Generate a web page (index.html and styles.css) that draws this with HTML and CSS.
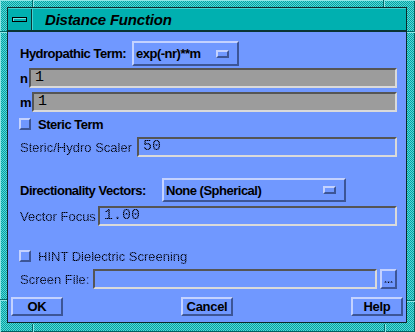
FILE: index.html
```html
<!DOCTYPE html>
<html>
<head>
<meta charset="utf-8">
<link rel="stylesheet" href="styles.css">
</head>
<body>
<div class="frame">
  <span class="mark mark-v mark-tl"></span>
  <span class="mark mark-v mark-tr"></span>
  <span class="mark mark-v mark-bl"></span>
  <span class="mark mark-v mark-br"></span>
  <span class="mark mark-h mark-lt"></span>
  <span class="mark mark-h mark-rt"></span>
  <span class="mark mark-h mark-lb"></span>
  <span class="mark mark-h mark-rb"></span>
  <div class="window">
    <div class="titlebar">
      <div class="menu-btn"><span class="minus"></span></div>
      <div class="title">Distance Function</div>
    </div>
    <div class="content">
      <div class="row row-opt r1">
        <span class="label bold w-hydro">Hydropathic Term:</span>
        <div class="option w-opt1"><span class="opt-text">exp(-nr)**m</span><span class="ind"></span></div>
      </div>
      <div class="row row-field r2">
        <span class="label bold w-n">n</span>
        <div class="field"><span class="ftext">1</span></div>
      </div>
      <div class="row row-field r3">
        <span class="label bold w-m">m</span>
        <div class="field"><span class="ftext">1</span></div>
      </div>
      <div class="row row-check r4">
        <span class="check"></span>
        <span class="label bold">Steric Term</span>
      </div>
      <div class="row row-field r5">
        <span class="label stip w-scaler">Steric/Hydro Scaler</span>
        <div class="field off"><span class="ftext stip">50</span></div>
      </div>
      <div class="row row-opt r6">
        <span class="label bold w-dir">Directionality Vectors:</span>
        <div class="option w-opt2"><span class="opt-text">None (Spherical)</span><span class="ind"></span></div>
      </div>
      <div class="row row-field r7">
        <span class="label stip w-vec">Vector Focus</span>
        <div class="field off"><span class="ftext stip">1.00</span></div>
      </div>
      <div class="row row-check r8">
        <span class="check"></span>
        <span class="label stip">HINT Dielectric Screening</span>
      </div>
      <div class="row row-field r9">
        <span class="label stip w-screen">Screen File:</span>
        <div class="field off"></div>
        <div class="dots"><span class="stip">...</span></div>
      </div>
      <div class="buttons">
        <div class="btn">OK</div>
        <div class="btn">Cancel</div>
        <div class="btn">Help</div>
      </div>
    </div>
  </div>
</div>
</body>
</html>
```

FILE: styles.css
```css
html, body {
  margin: 0;
  padding: 0;
}
body {
  width: 415px;
  height: 332px;
  overflow: hidden;
  font-family: "Liberation Sans", Arial, sans-serif;
}
.frame {
  position: relative;
  width: 415px;
  height: 332px;
  box-sizing: border-box;
  padding: 7px 8px 9px 7px;
  background-color: #00b0b0;
  background-image: repeating-conic-gradient(#5cd4d4 0 25%, #00a4a4 0 50%);
  background-size: 2px 2px;
  box-shadow: inset 1px 1px 0 #8ee6e6, inset -1px -1px 0 #006060;
}
.mark {
  position: absolute;
  background: #006a6a;
}
.mark-v {
  width: 1px;
  height: 7px;
  box-shadow: 1px 0 0 #8ee6e6;
}
.mark-h {
  height: 1px;
  width: 7px;
  box-shadow: 0 1px 0 #8ee6e6;
}
.mark-tl { left: 32px; top: 0; }
.mark-tr { left: 383px; top: 0; }
.mark-bl { left: 32px; top: 324px; height: 8px; }
.mark-br { left: 384px; top: 324px; height: 8px; }
.mark-lt { left: 0; top: 31px; }
.mark-rt { left: 407px; top: 31px; width: 8px; }
.mark-lb { left: 0; top: 299px; }
.mark-rb { left: 407px; top: 300px; width: 8px; }

.window {
  height: 100%;
  box-sizing: border-box;
  border: 1px solid #0c2a2a;
  display: flex;
  flex-direction: column;
}
.titlebar {
  height: 24px;
  box-sizing: border-box;
  flex: none;
  display: flex;
  background: #00b0b0;
  border-top: 1px solid #48d0d0;
  border-bottom: 2px solid #0a3434;
}
.menu-btn {
  width: 24px;
  box-sizing: border-box;
  border-right: 1px solid #0a3434;
  box-shadow: 1px 0 0 #48d0d0;
  display: flex;
  align-items: center;
  justify-content: center;
}
.minus {
  width: 15px;
  height: 5px;
  box-sizing: border-box;
  border: 1px solid #000;
  background: #00b0b0;
  box-shadow: inset 1px 1px 0 #6ee0e0;
}
.title {
  margin-left: 13px;
  font-size: 15px;
  font-weight: bold;
  font-style: italic;
  letter-spacing: -0.2px;
  line-height: 21px;
  color: #000;
}
.content {
  flex: 1;
  background: #7098ff;
  padding: 9px 9px 0 12px;
  display: flex;
  flex-direction: column;
}
.row {
  display: flex;
  align-items: center;
  flex: none;
}
.r1 { margin-top: 0; height: 25px; }
.r2 { margin-top: 2px; height: 20px; }
.r3 { margin-top: 4px; height: 20px; }
.r4 { margin-top: 6px; height: 12px; }
.r5 { margin-top: 7px; height: 20px; }
.r6 { margin-top: 21px; height: 24px; }
.r7 { margin-top: 4px; height: 20px; }
.r8 { margin-top: 24px; height: 12px; }
.r9 { margin-top: 7px; height: 20px; }

.label {
  font-size: 13px;
  color: #000;
  white-space: nowrap;
  flex: none;
}
.bold {
  font-weight: bold;
  letter-spacing: -0.5px;
}
.w-hydro { width: 112px; }
.w-dir { width: 142px; }
.w-n { width: 9px; }
.w-m { width: 12px; }
.w-scaler { width: 117px; }
.w-vec { width: 78px; }
.w-screen { width: 73px; }

.option {
  height: 100%;
  box-sizing: border-box;
  border: 2px solid;
  border-color: #c4d2ff #3c5596 #3c5596 #c4d2ff;
  display: flex;
  align-items: center;
  padding-left: 2px;
  position: relative;
}
.w-opt1 { width: 107px; }
.w-opt2 { width: 184px; }
.opt-text {
  font-size: 13px;
  font-weight: bold;
  letter-spacing: -0.5px;
  white-space: nowrap;
}
.ind {
  margin-left: auto;
  margin-right: 8px;
  width: 13px;
  height: 8px;
  box-sizing: border-box;
  border: 2px solid;
  border-color: #c4d2ff #3c5596 #3c5596 #c4d2ff;
}

.field {
  flex: 1;
  height: 100%;
  box-sizing: border-box;
  border: 2px solid;
  border-color: #555555 #dadada #dadada #555555;
  background: #9c9c9c;
  display: flex;
  align-items: center;
  padding-left: 4px;
}
.field.off {
  background: transparent;
}
.ftext {
  font-family: "Liberation Mono", "Courier New", monospace;
  font-size: 15px;
  line-height: 16px;
  color: #000;
}
.dots {
  width: 17px;
  height: 100%;
  margin-left: 3px;
  flex: none;
  box-sizing: border-box;
  border: 2px solid;
  border-color: #c4d2ff #3c5596 #3c5596 #c4d2ff;
  display: flex;
  align-items: center;
  justify-content: center;
  font-size: 11px;
  font-weight: bold;
}
.check {
  width: 12px;
  height: 12px;
  box-sizing: border-box;
  border: 2px solid;
  border-color: #c4d2ff #3c5596 #3c5596 #c4d2ff;
  margin-left: -1px;
  margin-right: 7px;
  flex: none;
}
.buttons {
  display: flex;
  justify-content: space-between;
  margin: 8px -6px 0 -9px;
  height: 19px;
}
.btn {
  width: 52px;
  box-sizing: border-box;
  border: 2px solid;
  border-color: #c4d2ff #3c5596 #3c5596 #c4d2ff;
  display: flex;
  align-items: center;
  justify-content: center;
  font-size: 13px;
  font-weight: bold;
  letter-spacing: -0.3px;
}
.label.stip,
.ftext.stip,
.dots .stip {
  color: transparent;
  background-image: repeating-conic-gradient(#000 0 25%, #34498e 0 50%);
  background-size: 2px 2px;
  -webkit-background-clip: text;
  background-clip: text;
}
```
